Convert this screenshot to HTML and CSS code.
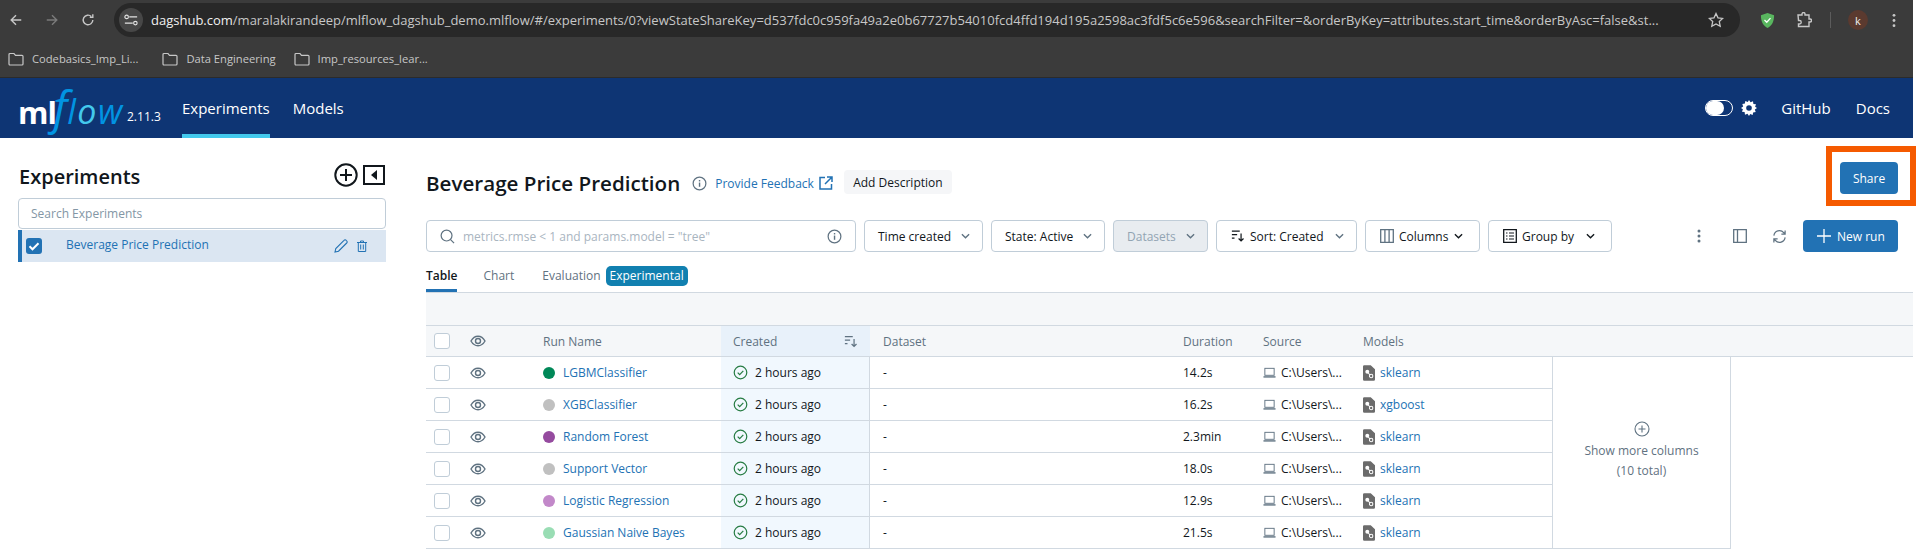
FILE: index.html
```html
<!DOCTYPE html>
<html lang="en">
<head>
    <meta charset="UTF-8">
    <title>MLflow Experiments</title>
    <link rel="stylesheet" href="styles.css">
</head>
<body>
    <svg class="sprite" xmlns="http://www.w3.org/2000/svg">
        <symbol id="i-eye" viewBox="0 0 16 16"><path d="M1 8c1.800-3.200 4.200-4.800 7-4.800s5.200 1.600 7 4.800c-1.800 3.200-4.200 4.800-7 4.800S2.800 11.200 1 8z" fill="none" stroke="currentColor" stroke-width="1.400"/><circle cx="8" cy="8" r="2.500" fill="none" stroke="currentColor" stroke-width="1.400"/></symbol>
        <symbol id="i-ok" viewBox="0 0 16 16"><circle cx="8" cy="8" r="6.700" fill="none" stroke="currentColor" stroke-width="1.300"/><path d="M5 8.200l2.100 2.100L11 6.200" fill="none" stroke="currentColor" stroke-width="1.300"/></symbol>
        <symbol id="i-laptop" viewBox="0 0 14 14"><rect x="2" y="2.500" width="10" height="7.500" fill="none" stroke="currentColor"/><rect x="0.500" y="11" width="13" height="1.500" fill="currentColor"/></symbol>
        <symbol id="i-model" viewBox="0 0 14 18"><path d="M1.500 0H9l5 4.500V16.500a1.500 1.500 0 0 1-1.500 1.500H1.500A1.500 1.500 0 0 1 0 16.500V1.500A1.500 1.500 0 0 1 1.500 0z" fill="currentColor"/><circle cx="5" cy="7.500" r="2.300" fill="#fff"/><circle cx="9.500" cy="12.500" r="2" fill="none" stroke="#fff" stroke-width="1.200"/><path d="M6 9l2.500 2.500" stroke="#fff" stroke-width="1.200"/></symbol>
        <symbol id="i-chevron" viewBox="0 0 10 6"><path d="M1 1l4 4 4-4" fill="none" stroke="currentColor" stroke-width="1.500"/></symbol>
        <symbol id="i-info" viewBox="0 0 16 16"><circle cx="8" cy="8" r="6.800" fill="none" stroke="currentColor" stroke-width="1.300"/><rect x="7.300" y="7" width="1.500" height="4.500" fill="currentColor"/><rect x="7.300" y="4.300" width="1.500" height="1.500" fill="currentColor"/></symbol>
        <symbol id="i-folder" viewBox="0 0 16 14"><path d="M1 2.500a1 1 0 0 1 1-1h4l1.500 1.800H14a1 1 0 0 1 1 1V12a1 1 0 0 1-1 1H2a1 1 0 0 1-1-1z" fill="none" stroke="currentColor" stroke-width="1.200"/></symbol>
        <symbol id="i-sort" viewBox="0 0 16 14"><path d="M1 1.500h9M1 5.500h6M1 9.500h3" fill="none" stroke="currentColor" stroke-width="1.400"/><path d="M11.500 4v8.500M8.700 9.800l2.800 2.800 2.800-2.800" fill="none" stroke="currentColor" stroke-width="1.400"/></symbol>
    </svg>

    <div class="browser">
        <div class="tabbar">
            <div class="nav-btns">
                <svg class="nav-icon" viewBox="0 0 16 16"><path d="M14 8H2.500M8 2.500L2.500 8 8 13.500" fill="none" stroke="currentColor" stroke-width="1.600"/></svg>
                <svg class="nav-icon nav-off" viewBox="0 0 16 16"><path d="M2 8h11.500M8 2.500L13.500 8 8 13.500" fill="none" stroke="currentColor" stroke-width="1.600"/></svg>
                <svg class="nav-icon" viewBox="0 0 16 16"><path d="M13.500 8a5.500 5.500 0 1 1-1.700-4M13.500 1.500V5H10" fill="none" stroke="currentColor" stroke-width="1.600"/></svg>
            </div>
            <div class="url-pill">
                <span class="url-tune">
                    <svg viewBox="0 0 16 16"><path d="M6 4.500h9M1 11.500h9" stroke="currentColor" stroke-width="1.300"/><circle cx="3" cy="4.500" r="2" fill="none" stroke="currentColor" stroke-width="1.300"/><circle cx="13" cy="11.500" r="2" fill="none" stroke="currentColor" stroke-width="1.300"/></svg>
                </span>
                <span class="url-text"><span class="url-host">dagshub.com</span>/maralakirandeep/mlflow_dagshub_demo.mlflow/#/experiments/0?viewStateShareKey=d537fdc0c959fa49a2e0b67727b54010fcd4ffd194d195a2598ac3fdf5c6e596&amp;searchFilter=&amp;orderByKey=attributes.start_time&amp;orderByAsc=false&amp;st...</span>
                <svg class="url-star" viewBox="0 0 16 16"><path d="M8 1.500l2 4.300 4.700.6-3.400 3.200.9 4.700L8 12l-4.200 2.300.9-4.700L1.300 6.400 6 5.800z" fill="none" stroke="currentColor" stroke-width="1.300"/></svg>
            </div>
            <div class="ext-btns">
                <svg class="ext-shield" viewBox="0 0 16 18"><path d="M8 1l7 2.500c0 6.500-2 10.800-7 13.500C3 14.300 1 10 1 3.500z" fill="#59b65f"/><path d="M4.800 8.500l2.400 2.400 4-4.400" fill="none" stroke="#fff" stroke-width="1.400"/></svg>
                <svg class="ext-puzzle" viewBox="0 0 16 16"><path d="M2 3h4V2a1.500 1.500 0 0 1 3 0v1h4v4h1a1.500 1.500 0 0 1 0 3h-1v4.500H2.500v-2.500h1a1.500 1.500 0 0 0 0-3.500h-1z" fill="none" stroke="currentColor" stroke-width="1.400"/></svg>
                <span class="ext-sep"></span>
                <span class="avatar">k</span>
                <svg class="ext-dots" viewBox="0 0 4 16"><circle cx="2" cy="2.500" r="1.500" fill="currentColor"/><circle cx="2" cy="8" r="1.500" fill="currentColor"/><circle cx="2" cy="13.500" r="1.500" fill="currentColor"/></svg>
            </div>
        </div>
        <div class="bookmarks">
            <a class="bookmark first"><svg><use href="#i-folder"/></svg>Codebasics_Imp_Li...</a>
            <a class="bookmark"><svg><use href="#i-folder"/></svg>Data Engineering</a>
            <a class="bookmark"><svg><use href="#i-folder"/></svg>Imp_resources_lear...</a>
        </div>
    </div>

    <header class="topbar">
        <div class="logo"><span class="logo-ml">ml</span><span class="logo-f">f</span><span class="logo-flow">l<span class="logo-o">o</span>w</span></div>
        <span class="version">2.11.3</span>
        <nav class="topnav">
            <a class="topnav-link active">Experiments</a>
            <a class="topnav-link">Models</a>
        </nav>
        <div class="topbar-right">
            <span class="toggle"><span class="knob"></span></span>
            <svg class="gear" viewBox="0 0 16 16"><path d="M8 0l1.500 2.200 2.500-.9.400 2.600 2.600.4-.9 2.500L16 8l-2.200 1.500.9 2.500-2.600.4-.4 2.600-2.500-.9L8 16l-1.500-2.200-2.500.9-.4-2.600-2.600-.4.9-2.500L0 8l2.200-1.500-.9-2.500 2.600-.4.4-2.600 2.500.9z" fill="#fff"/><circle cx="8" cy="8" r="2.800" fill="#0e3574"/></svg>
            <a class="topbar-link github">GitHub</a>
            <a class="topbar-link">Docs</a>
        </div>
    </header>

    <div class="page">
        <aside class="sidebar">
            <div class="sidebar-head">
                <h2>Experiments</h2>
                <svg class="add-exp" viewBox="0 0 24 24"><circle cx="12" cy="12" r="10.700" fill="none" stroke="currentColor" stroke-width="2"/><path d="M12 6v12M6 12h12" stroke="currentColor" stroke-width="2"/></svg>
                <svg class="collapse" viewBox="0 0 22 20"><rect x="1" y="1" width="20" height="18" fill="none" stroke="currentColor" stroke-width="2"/><path d="M14 5v10l-6-5z" fill="currentColor"/></svg>
            </div>
            <div class="exp-search">Search Experiments</div>
            <div class="exp-row">
                <span class="exp-check"><svg viewBox="0 0 16 16"><path d="M3.500 8.300l3 3 6-6" fill="none" stroke="#fff" stroke-width="2"/></svg></span>
                <span class="exp-name">Beverage Price Prediction</span>
                <svg class="exp-edit" viewBox="0 0 14 14"><path d="M1 13l.8-3.500L10 1.300a1.500 1.500 0 0 1 2.200 0l.5.5a1.500 1.500 0 0 1 0 2.200L4.500 12.200z" fill="none" stroke="currentColor" stroke-width="1.100"/></svg>
                <svg class="exp-trash" viewBox="0 0 10 12"><path d="M0 2.500h10M3.500 2.500V1h3v1.500M1.300 2.500V11.500h7.400V2.500M3.700 4.500v5M6.300 4.500v5" fill="none" stroke="currentColor"/></svg>
            </div>
        </aside>

        <main class="content">
            <div class="title-row">
                <h1>Beverage Price Prediction</h1>
                <svg class="title-info"><use href="#i-info"/></svg>
                <a class="feedback">Provide Feedback</a>
                <svg class="feedback-icon" viewBox="0 0 14 14"><path d="M6 1.500H1v11.500h11.500V8M8 1h5v5M13 1L6 8" fill="none" stroke="currentColor" stroke-width="1.500"/></svg>
                <button class="desc-btn">Add Description</button>
                <div class="share-box"><button class="primary share-btn">Share</button></div>
            </div>

            <div class="controls">
                <div class="run-search">
                    <svg class="run-search-icon" viewBox="0 0 16 16"><circle cx="7" cy="7" r="5.800" fill="none" stroke="currentColor" stroke-width="1.300"/><path d="M11 11l4 4" stroke="currentColor" stroke-width="1.300"/></svg>
                    <span class="run-search-text">metrics.rmse &lt; 1 and params.model = "tree"</span>
                    <svg class="run-search-info"><use href="#i-info"/></svg>
                </div>
                <button class="select w-time">Time created<svg class="chev"><use href="#i-chevron"/></svg></button>
                <button class="select w-state">State: Active<svg class="chev"><use href="#i-chevron"/></svg></button>
                <button class="select w-data" disabled>Datasets<svg class="chev"><use href="#i-chevron"/></svg></button>
                <button class="select w-sort"><svg class="btn-icon"><use href="#i-sort"/></svg>Sort: Created<svg class="chev"><use href="#i-chevron"/></svg></button>
                <button class="select w-cols">
                    <svg class="btn-icon cols-icon" viewBox="0 0 14 14"><path d="M.7.7h12.600v12.600H.7zM4.900.7v12.600M9.100.7v12.600" fill="none" stroke="currentColor" stroke-width="1.300"/></svg>
                    Columns<svg class="chev dark"><use href="#i-chevron"/></svg>
                </button>
                <button class="select w-group">
                    <svg class="btn-icon" viewBox="0 0 14 14"><path d="M.7.7h12.600v12.600H.7z" fill="none" stroke="currentColor" stroke-width="1.300"/><path d="M3 4h1.500M3 7h1.500M3 10h1.500M6 4h5M6 7h5M6 10h5" stroke="currentColor" stroke-width="1.200"/></svg>
                    Group by<svg class="chev dark"><use href="#i-chevron"/></svg>
                </button>
                <div class="controls-right">
                    <svg class="more-dots" viewBox="0 0 4 14"><circle cx="2" cy="2" r="1.500" fill="currentColor"/><circle cx="2" cy="7" r="1.500" fill="currentColor"/><circle cx="2" cy="12" r="1.500" fill="currentColor"/></svg>
                    <svg class="panel-icon" viewBox="0 0 14 14"><path d="M.7.7h12.600v12.600H.7zM4.500.7v12.600" fill="none" stroke="currentColor" stroke-width="1.300"/></svg>
                    <svg class="refresh-icon" viewBox="0 0 16 16"><path d="M2 7a6 6 0 0 1 10.500-3.200L14 5.500M14 1.500v4h-4M14 9a6 6 0 0 1-10.500 3.200L2 10.500M2 14.500v-4h4" fill="none" stroke="currentColor" stroke-width="1.300"/></svg>
                    <button class="primary new-run"><svg viewBox="0 0 14 14"><path d="M7 0v14M0 7h14" stroke="#fff" stroke-width="1.300"/></svg>New run</button>
                </div>
            </div>

            <div class="tabs">
                <a class="tab active">Table</a>
                <a class="tab">Chart</a>
                <a class="tab">Evaluation</a>
                <span class="badge">Experimental</span>
            </div>

            <div class="table-gap"></div>

            <div class="row head">
                <span class="c-check"><span class="box"></span></span>
                <span class="c-eye"><svg class="eye"><use href="#i-eye"/></svg></span>
                <span class="c-name">Run Name</span>
                <span class="c-created">Created<svg class="head-sort"><use href="#i-sort"/></svg></span>
                <span class="c-data">Dataset</span>
                <span class="c-dur">Duration</span>
                <span class="c-src">Source</span>
                <span class="c-model">Models</span>
            </div>

            <div class="table-body">
                <div class="rows">
                    <div class="row">
                        <span class="c-check"><span class="box"></span></span>
                        <span class="c-eye"><svg class="eye"><use href="#i-eye"/></svg></span>
                        <span class="c-name"><i class="dot d-green"></i><a>LGBMClassifier</a></span>
                        <span class="c-created"><svg class="ok"><use href="#i-ok"/></svg>2 hours ago</span>
                        <span class="c-data">-</span>
                        <span class="c-dur">14.2s</span>
                        <span class="c-src"><svg class="laptop"><use href="#i-laptop"/></svg>C:\Users\...</span>
                        <span class="c-model"><svg class="model"><use href="#i-model"/></svg><a>sklearn</a></span>
                    </div>
                    <div class="row">
                        <span class="c-check"><span class="box"></span></span>
                        <span class="c-eye"><svg class="eye"><use href="#i-eye"/></svg></span>
                        <span class="c-name"><i class="dot d-grey"></i><a>XGBClassifier</a></span>
                        <span class="c-created"><svg class="ok"><use href="#i-ok"/></svg>2 hours ago</span>
                        <span class="c-data">-</span>
                        <span class="c-dur">16.2s</span>
                        <span class="c-src"><svg class="laptop"><use href="#i-laptop"/></svg>C:\Users\...</span>
                        <span class="c-model"><svg class="model"><use href="#i-model"/></svg><a>xgboost</a></span>
                    </div>
                    <div class="row">
                        <span class="c-check"><span class="box"></span></span>
                        <span class="c-eye"><svg class="eye"><use href="#i-eye"/></svg></span>
                        <span class="c-name"><i class="dot d-purple"></i><a>Random Forest</a></span>
                        <span class="c-created"><svg class="ok"><use href="#i-ok"/></svg>2 hours ago</span>
                        <span class="c-data">-</span>
                        <span class="c-dur">2.3min</span>
                        <span class="c-src"><svg class="laptop"><use href="#i-laptop"/></svg>C:\Users\...</span>
                        <span class="c-model"><svg class="model"><use href="#i-model"/></svg><a>sklearn</a></span>
                    </div>
                    <div class="row">
                        <span class="c-check"><span class="box"></span></span>
                        <span class="c-eye"><svg class="eye"><use href="#i-eye"/></svg></span>
                        <span class="c-name"><i class="dot d-grey"></i><a>Support Vector</a></span>
                        <span class="c-created"><svg class="ok"><use href="#i-ok"/></svg>2 hours ago</span>
                        <span class="c-data">-</span>
                        <span class="c-dur">18.0s</span>
                        <span class="c-src"><svg class="laptop"><use href="#i-laptop"/></svg>C:\Users\...</span>
                        <span class="c-model"><svg class="model"><use href="#i-model"/></svg><a>sklearn</a></span>
                    </div>
                    <div class="row">
                        <span class="c-check"><span class="box"></span></span>
                        <span class="c-eye"><svg class="eye"><use href="#i-eye"/></svg></span>
                        <span class="c-name"><i class="dot d-lilac"></i><a>Logistic Regression</a></span>
                        <span class="c-created"><svg class="ok"><use href="#i-ok"/></svg>2 hours ago</span>
                        <span class="c-data">-</span>
                        <span class="c-dur">12.9s</span>
                        <span class="c-src"><svg class="laptop"><use href="#i-laptop"/></svg>C:\Users\...</span>
                        <span class="c-model"><svg class="model"><use href="#i-model"/></svg><a>sklearn</a></span>
                    </div>
                    <div class="row">
                        <span class="c-check"><span class="box"></span></span>
                        <span class="c-eye"><svg class="eye"><use href="#i-eye"/></svg></span>
                        <span class="c-name"><i class="dot d-mint"></i><a>Gaussian Naive Bayes</a></span>
                        <span class="c-created"><svg class="ok"><use href="#i-ok"/></svg>2 hours ago</span>
                        <span class="c-data">-</span>
                        <span class="c-dur">21.5s</span>
                        <span class="c-src"><svg class="laptop"><use href="#i-laptop"/></svg>C:\Users\...</span>
                        <span class="c-model"><svg class="model"><use href="#i-model"/></svg><a>sklearn</a></span>
                    </div>
                </div>
                <div class="more-cols">
                    <svg class="more-plus" viewBox="0 0 16 16"><circle cx="8" cy="8" r="7" fill="none" stroke="currentColor" stroke-width="1.100"/><path d="M8 4.500v7M4.500 8h7" stroke="currentColor" stroke-width="1.100"/></svg>
                    <span>Show more columns</span>
                    <span>(10 total)</span>
                </div>
            </div>
        </main>
    </div>
</body>
</html>
```

FILE: styles.css
```css
/* Variables */
:root {
    --font: "Open Sans", "Noto Sans", sans-serif;
    --text: #11171c;
    --link: #2272b4;
    --muted: #5f7281;
    --line: #d1d9e1;
    --control: #c0cdd8;
    --navy: #0e3574;
}

* {
    box-sizing: border-box;
}

body {
    margin: 0;
    width: 1917px;
    height: 558px;
    overflow: hidden;
    background: #fff;
    color: var(--text);
    font-family: var(--font);
    font-size: 12px;
}

svg {
    display: block;
    flex: none;
}

.sprite {
    display: none;
}

button {
    font-family: inherit;
}

/* Browser chrome */
.browser {
    width: 1913px;
    height: 78px;
    background: #3b3b3b;
    color: #c7c7c7;
    border-bottom: 1px solid #2b2b2b;
}

.tabbar {
    height: 40px;
    display: flex;
    align-items: center;
}

.nav-btns {
    width: 114px;
    padding-left: 9px;
    display: flex;
    gap: 22px;
}

.nav-icon {
    width: 14px;
    height: 14px;
}

.nav-off {
    color: #7b7b7b;
}

.url-pill {
    width: 1626px;
    height: 34px;
    background: #282828;
    border-radius: 17px;
    display: flex;
    align-items: center;
    padding-left: 5px;
}

.url-tune {
    width: 24px;
    height: 24px;
    border-radius: 50%;
    background: #474747;
    color: #e3e3e3;
    display: flex;
    align-items: center;
    justify-content: center;
    margin-right: 8px;
}

.url-tune svg {
    width: 14px;
    height: 14px;
}

.url-text {
    width: 1537px;
    white-space: nowrap;
    overflow: hidden;
    font-size: 13px;
    color: #c7c7c7;
}

.url-host {
    color: #f0f0f0;
}

.url-star {
    width: 16px;
    height: 16px;
    margin-left: 20px;
    color: #c7c7c7;
}

.ext-btns {
    display: flex;
    align-items: center;
}

.ext-shield {
    width: 15px;
    height: 17px;
    margin-left: 20px;
}

.ext-puzzle {
    width: 16px;
    height: 16px;
    margin-left: 21px;
}

.ext-sep {
    width: 1px;
    height: 16px;
    background: #5c5c5c;
    margin-left: 18px;
}

.avatar {
    width: 20px;
    height: 20px;
    border-radius: 50%;
    background: #5b3a2f;
    color: #eee;
    font-size: 11px;
    display: flex;
    align-items: center;
    justify-content: center;
    margin-left: 17px;
}

.ext-dots {
    width: 4px;
    height: 15px;
    margin-left: 24px;
}

.bookmarks {
    height: 37px;
    display: flex;
    align-items: center;
    padding-left: 8px;
    gap: 18px;
}

.bookmark {
    display: flex;
    align-items: center;
    gap: 8px;
    font-size: 11.200px;
    color: #c7c7c7;
}

.bookmark.first {
    margin-right: 6px;
}

.bookmark svg {
    width: 16px;
    height: 14px;
}

/* MLflow header */
.topbar {
    width: 1913px;
    height: 60px;
    background: var(--navy);
    color: #fff;
    display: flex;
    align-items: center;
    padding-left: 18px;
}

.logo {
    width: 109px;
    height: 60px;
    font-size: 30px;
    line-height: 56px;
    white-space: nowrap;
}

.logo-ml {
    font-weight: 700;
    font-size: 31px;
    letter-spacing: -1px;
}

.logo-f {
    font-style: italic;
    font-size: 46px;
    color: #0194e2;
    margin-left: -3px;
}

.logo-flow {
    font-style: italic;
    font-size: 34px;
    color: #0194e2;
    letter-spacing: 1.500px;
}

.logo-o {
    color: #43c9ed;
}

.version {
    width: 55px;
    padding-top: 16px;
    font-size: 12px;
}

.topnav {
    display: flex;
    gap: 23px;
    height: 60px;
}

.topnav-link {
    font-size: 15px;
    line-height: 60px;
    height: 60px;
}

.topnav-link.active {
    border-bottom: 4px solid #43c9ed;
}

.topbar-right {
    margin-left: auto;
    display: flex;
    align-items: center;
    padding-right: 23px;
}

.toggle {
    width: 28px;
    height: 16px;
    border-radius: 8px;
    background: #0e3574;
    border: 1px solid #fff;
    display: block;
}

.knob {
    display: block;
    width: 18px;
    height: 14px;
    border-radius: 7px;
    background: #fff;
}

.gear {
    width: 16px;
    height: 16px;
    margin-left: 8px;
}

.topbar-link {
    font-size: 15px;
}

.github {
    margin: 0 25px 0 24px;
}

/* Page */
.page {
    display: flex;
    width: 1913px;
    height: 420px;
}

.sidebar {
    width: 426px;
    padding: 25px 0 0 18px;
}

.sidebar-head {
    width: 368px;
    height: 35px;
    display: flex;
    align-items: flex-start;
    padding-left: 1px;
}

.sidebar-head h2 {
    margin: 0;
    font-size: 20px;
    font-weight: 600;
    line-height: 28px;
    flex: 1;
}

.add-exp {
    width: 24px;
    height: 24px;
}

.collapse {
    width: 22px;
    height: 20px;
    margin: 2px 1px 0 5px;
}

.exp-search {
    width: 368px;
    height: 31px;
    border: 1px solid var(--control);
    border-radius: 4px;
    padding-left: 12px;
    line-height: 29px;
    font-size: 12px;
    color: #8396a5;
}

.exp-row {
    width: 368px;
    height: 32px;
    margin-top: 1px;
    background: #dbe6f2;
    border-left: 4px solid var(--link);
    display: flex;
    align-items: center;
    padding-left: 4px;
    color: var(--link);
}

.exp-check {
    width: 16px;
    height: 16px;
    border-radius: 3px;
    background: var(--link);
    margin-right: 24px;
}

.exp-name {
    width: 268px;
    font-size: 12px;
    padding-bottom: 3px;
}

.exp-edit {
    width: 14px;
    height: 14px;
}

.exp-trash {
    width: 10px;
    height: 12px;
    margin-left: 9px;
}

.content {
    width: 1487px;
    padding-top: 16px;
    position: relative;
}

.title-row {
    height: 58px;
    margin-bottom: 8px;
    display: flex;
    align-items: center;
}

.title-row h1 {
    margin: 0;
    font-size: 20.600px;
    font-weight: 600;
}

.title-info {
    width: 15px;
    height: 15px;
    margin-left: 12px;
    color: #5f7281;
}

.feedback {
    font-size: 12px;
    color: var(--link);
    margin-left: 8px;
}

.feedback-icon {
    width: 14px;
    height: 14px;
    margin-left: 5px;
    color: var(--link);
}

.desc-btn {
    width: 108px;
    height: 24px;
    margin: -2px 0 0 11px;
    border: 0;
    border-radius: 4px;
    background: #f5f6f8;
    color: var(--text);
    font-size: 12px;
    padding: 0;
}

/* Highlight drawn over the page around Share */
.share-box {
    position: absolute;
    top: 8px;
    left: 1400px;
    width: 90px;
    height: 60px;
    border: 6px solid #f55a00;
    padding: 10px 0 0 8px;
    background: #fff;
}

.primary {
    background: var(--link);
    color: #fff;
    border: 0;
    border-radius: 4px;
    font-size: 12px;
    padding: 0;
}

.share-btn {
    width: 58px;
    height: 32px;
}

.controls {
    display: flex;
    align-items: center;
    gap: 8px;
    height: 32px;
    width: 1472px;
}

.run-search {
    width: 430px;
    height: 32px;
    border: 1px solid var(--control);
    border-radius: 4px;
    display: flex;
    align-items: center;
    padding: 0 13px;
    color: #5f7281;
}

.run-search-icon {
    width: 15px;
    height: 15px;
}

.run-search-text {
    flex: 1;
    margin-left: 8px;
    font-size: 12px;
    color: #a9b5bf;
}

.run-search-info {
    width: 15px;
    height: 15px;
}

.select {
    height: 32px;
    border: 1px solid var(--control);
    border-radius: 4px;
    background: #fff;
    color: var(--text);
    font-size: 12px;
    display: flex;
    align-items: center;
    padding: 0 12px 0 14px;
    white-space: nowrap;
}

.select:disabled {
    background: #e8ecf0;
    color: #92a4b3;
}

.chev {
    width: 9px;
    height: 6px;
    margin-left: auto;
    color: #5f7281;
}

.chev.dark {
    color: var(--text);
    margin-right: 4px;
}

.btn-icon {
    width: 14px;
    height: 14px;
    margin-right: 5px;
}

.cols-icon {
    color: #5f7281;
}

.w-time { width: 119px; padding-left: 13px; }
.w-state { width: 114px; padding-left: 13px; }
.w-data { width: 95px; padding-left: 13px; }
.w-sort { width: 141px; }
.w-cols { width: 115px; }
.w-group { width: 124px; }

.controls-right {
    margin-left: auto;
    display: flex;
    align-items: center;
}

.more-dots {
    width: 4px;
    height: 14px;
    color: #5f7281;
}

.panel-icon {
    width: 14px;
    height: 14px;
    margin-left: 32px;
    color: #5f7281;
}

.refresh-icon {
    width: 15px;
    height: 15px;
    margin-left: 25px;
    color: #5f7281;
}

.new-run {
    width: 95px;
    height: 32px;
    margin-left: 16px;
    display: flex;
    align-items: center;
    padding-left: 14px;
    gap: 6px;
}

.new-run svg {
    width: 14px;
    height: 14px;
}

/* Tabs */
.tabs {
    margin-top: 14px;
    height: 27px;
    display: flex;
    align-items: flex-start;
    border-bottom: 1px solid var(--line);
}

.tab {
    font-size: 12px;
    line-height: 20px;
    height: 26px;
    color: var(--muted);
    margin-right: 28px;
}

.tab.active {
    margin-right: 26px;
}

.tab:nth-child(3) {
    margin-right: 5px;
}

.tab.active {
    color: var(--text);
    font-weight: 600;
    border-bottom: 3px solid var(--link);
}

.badge {
    background: #1180b0;
    color: #fff;
    font-size: 12px;
    line-height: 20px;
    height: 20px;
    padding: 0 4px;
    border-radius: 5px;
}

.table-gap {
    height: 32px;
    background: #f5f7f9;
}

/* Run table */
.row {
    display: grid;
    grid-template-columns: 44px 73px 178px 149px 313px 80px 100px 189px;
    height: 32px;
    align-items: center;
    border-bottom: 1px solid var(--line);
    font-size: 12px;
}

.row > span {
    display: flex;
    align-items: center;
    height: 100%;
    white-space: nowrap;
}

.head {
    background: #f5f7f9;
    color: var(--muted);
    border-top: 1px solid var(--line);
}

.c-check {
    padding-left: 8px;
}

.box {
    width: 16px;
    height: 16px;
    border: 1px solid var(--control);
    border-radius: 3px;
    background: #fff;
}

.eye {
    width: 16px;
    height: 16px;
    color: #5f7281;
}

.c-created {
    background: #f1f8fe;
    padding-left: 12px;
    border-right: 1px solid var(--line);
}

.head .c-created {
    background: #e8f1fa;
    border-right: 0;
}

.head-sort {
    width: 14px;
    height: 13px;
    margin-left: auto;
    margin-right: 12px;
}

.c-data {
    padding-left: 13px;
}

.table-body {
    display: flex;
}

.rows {
    width: 1126px;
}

.dot {
    width: 12px;
    height: 12px;
    border-radius: 50%;
    margin-right: 8px;
}

.d-green { background: #008858; }
.d-grey { background: #c0c0c0; }
.d-purple { background: #954b9f; }
.d-lilac { background: #c288c9; }
.d-mint { background: #99ddb4; }

.c-name a,
.c-model a {
    color: var(--link);
}

.ok {
    width: 15px;
    height: 15px;
    margin-right: 7px;
    color: #277c43;
}

.laptop {
    width: 13px;
    height: 13px;
    margin-right: 5px;
    color: #5f7281;
}

.model {
    width: 12px;
    height: 16px;
    margin-right: 5px;
    color: #6b6b6b;
}

.more-cols {
    width: 179px;
    height: 192px;
    border: 1px solid var(--line);
    border-top: 0;
    display: flex;
    flex-direction: column;
    align-items: center;
    justify-content: center;
    color: var(--muted);
    font-size: 12px;
    line-height: 20px;
    padding-bottom: 4px;
}

.more-plus {
    width: 16px;
    height: 16px;
    margin-bottom: 4px;
}
```
